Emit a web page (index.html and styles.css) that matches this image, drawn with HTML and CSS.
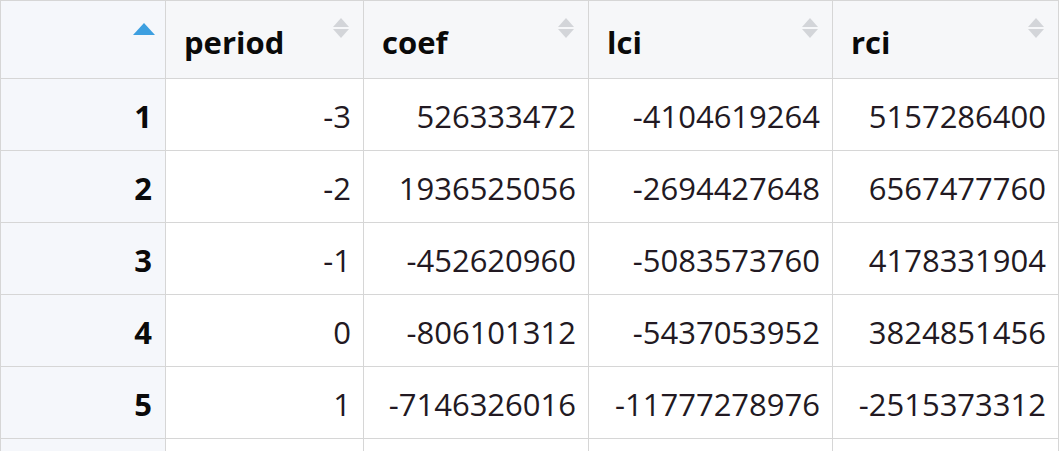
FILE: index.html
```html
<!DOCTYPE html>
<html>
<head>
<meta charset="utf-8">
<link rel="stylesheet" href="styles.css">
</head>
<body>
<table class="grid">
  <colgroup>
    <col class="c-rn"><col class="c-period"><col class="c-coef"><col class="c-lci"><col class="c-rci">
  </colgroup>
  <thead>
    <tr>
      <th class="rn-head"><span class="asc"></span></th>
      <th>period<span class="sort"><i class="up"></i><i class="down"></i></span></th>
      <th>coef<span class="sort"><i class="up"></i><i class="down"></i></span></th>
      <th>lci<span class="sort"><i class="up"></i><i class="down"></i></span></th>
      <th>rci<span class="sort"><i class="up"></i><i class="down"></i></span></th>
    </tr>
  </thead>
  <tbody>
    <tr><td class="rn">1</td><td>-3</td><td>526333472</td><td>-4104619264</td><td>5157286400</td></tr>
    <tr><td class="rn">2</td><td>-2</td><td>1936525056</td><td>-2694427648</td><td>6567477760</td></tr>
    <tr><td class="rn">3</td><td>-1</td><td>-452620960</td><td>-5083573760</td><td>4178331904</td></tr>
    <tr><td class="rn">4</td><td>0</td><td>-806101312</td><td>-5437053952</td><td>3824851456</td></tr>
    <tr><td class="rn">5</td><td>1</td><td>-7146326016</td><td>-11777278976</td><td>-2515373312</td></tr>
    <tr class="partial"><td class="rn"></td><td></td><td></td><td></td><td></td></tr>
  </tbody>
</table>
</body>
</html>
```
FILE: styles.css
```css
html, body {
  margin: 0;
  padding: 0;
  background: #ffffff;
}
body {
  font-family: "Open Sans", "Noto Sans", "DejaVu Sans", sans-serif;
  overflow: hidden;
}
.grid {
  border-collapse: collapse;
  table-layout: fixed;
  width: 1058px;
  border: 1px solid #d4d4d4;
  border-top: 1px solid #e4e4e4;
}
.c-rn { width: 165px; }
.c-period { width: 198px; }
.c-coef { width: 225px; }
.c-lci { width: 244px; }
.c-rci { width: 226px; }

.grid th, .grid td {
  border: 1px solid #d6d6d6;
  padding: 0 12px 0 18px;
  box-sizing: border-box;
}
.grid th {
  position: relative;
  height: 78px;
  background: #f6f7f9;
  text-align: left;
  font-weight: 700;
  font-size: 31px;
  color: #0a0a0a;
  padding-top: 4px;
  vertical-align: middle;
}
.grid td {
  height: 72px;
  text-align: right;
  font-size: 31px;
  color: #221922;
  vertical-align: middle;
  padding-top: 2px;
}
.grid td.rn, .grid th.rn-head {
  background: #f5f7fb;
}
.grid td.rn {
  font-weight: 700;
  color: #0a0a0a;
  padding-right: 13px;
}
.asc {
  position: absolute;
  left: 132px;
  top: 22px;
  width: 0;
  height: 0;
  border-left: 11px solid transparent;
  border-right: 11px solid transparent;
  border-bottom: 12px solid #3d9fe0;
}
.sort {
  position: absolute;
  right: 14px;
  top: 17px;
  width: 16px;
  height: 21px;
}
.sort i {
  position: absolute;
  left: 0;
  width: 0;
  height: 0;
  border-left: 8px solid transparent;
  border-right: 8px solid transparent;
}
.sort .up {
  top: 0;
  border-bottom: 9px solid #d3d5d9;
}
.sort .down {
  top: 11px;
  border-top: 9px solid #d3d5d9;
}
.grid tr.partial td {
  height: 20px;
}
```
